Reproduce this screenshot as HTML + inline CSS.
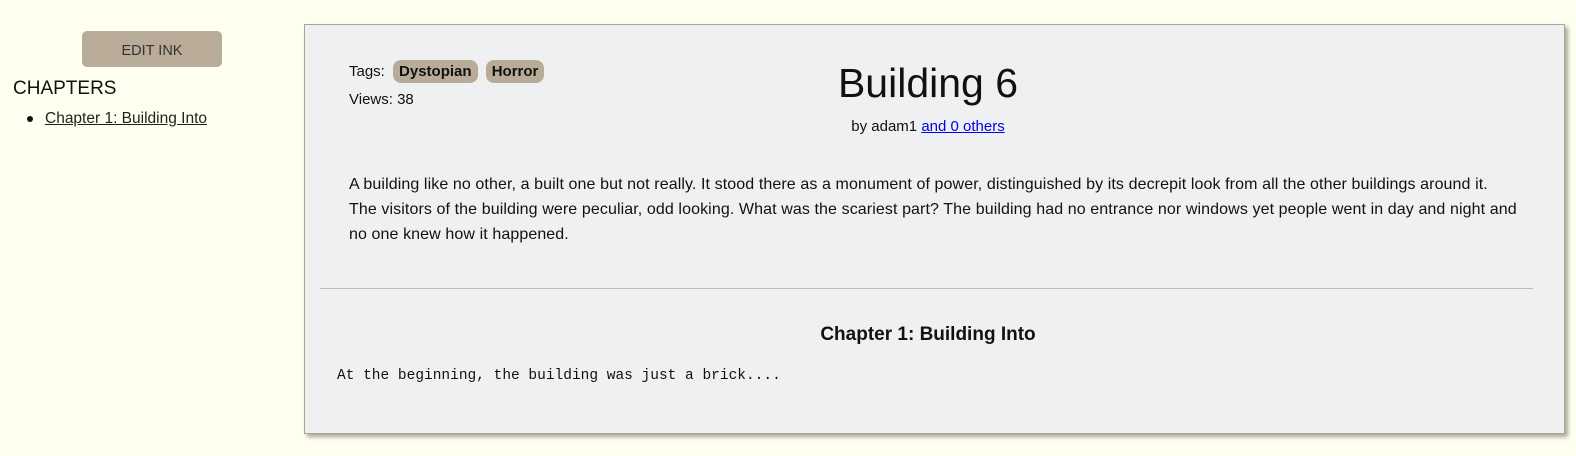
<!DOCTYPE html>
<html><head><style>
body{margin:0;background:#fffff0;font-family:"Liberation Sans","DejaVu Sans",sans-serif;color:#111;width:1576px;height:456px;overflow:hidden;position:relative}
.btn{position:absolute;left:82px;top:31px;width:140px;height:36px;background:#b8ac99;border-radius:5px;color:#333;font-size:14.5px;text-align:center;line-height:40px}
.ch{position:absolute;left:13px;top:78px;font-size:19px}
.li{position:absolute;left:45px;top:110px;font-size:15.5px;color:#222;text-decoration:underline}
.dot{position:absolute;left:27px;top:116px;width:6px;height:6px;border-radius:50%;background:#111}
.panel{position:absolute;left:304px;top:24px;width:1251px;height:408px;background:#eff0f2;border:1px solid #b0a491;box-shadow:3px 3px 4px rgba(0,0,0,.35)}
.tags{position:absolute;left:44px;top:35px;font-size:15px}
.tag{display:inline-block;background:#b8ac99;border-radius:8px;padding:3px 6px;font-weight:bold;margin-left:4px}
.views{position:absolute;left:44px;top:66px;font-size:15px}
h1{position:absolute;left:0;width:1246px;text-align:center;top:35px;margin:0;font-size:41px;font-weight:normal}
.by{position:absolute;left:0;width:1246px;text-align:center;top:93px;font-size:15px}
.by a{color:#00e}
.desc{position:absolute;left:44px;top:147px;white-space:nowrap;font-size:16px;line-height:25px;letter-spacing:0.1px}
hr{position:absolute;left:15px;top:263px;width:1213px;margin:0;border:0;border-top:1px solid #bbb}
h2{position:absolute;left:0;width:1246px;text-align:center;top:299px;margin:0;font-size:19px}
pre{position:absolute;left:32px;top:343px;margin:0;font-family:"Liberation Mono",monospace;font-size:14.5px}
</style></head><body>
<div class="btn">EDIT INK</div>
<div class="ch">CHAPTERS</div>
<div class="dot"></div>
<div class="li">Chapter 1: Building Into</div>
<div class="panel" style="width:1259px">
<div class="tags">Tags: <span class="tag">Dystopian</span> <span class="tag">Horror</span></div>
<div class="views">Views: 38</div>
<h1>Building 6</h1>
<div class="by">by adam1 <a href="#">and 0 others</a></div>
<div class="desc">A building like no other, a built one but not really. It stood there as a monument of power, distinguished by its decrepit look from all the other buildings around it.<br>The visitors of the building were peculiar, odd looking. What was the scariest part? The building had no entrance nor windows yet people went in day and night and<br>no one knew how it happened.</div>
<hr>
<h2>Chapter 1: Building Into</h2>
<pre>At the beginning, the building was just a brick....</pre>
</div>
</body></html>
